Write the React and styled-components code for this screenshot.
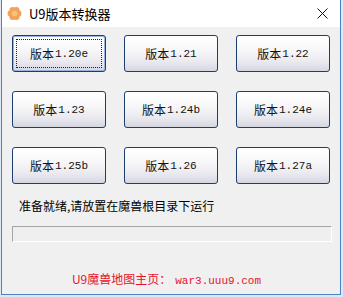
import React from "react";
import styled, { createGlobalStyle } from "styled-components";

const versions = [
  "1.20e", "1.21", "1.22",
  "1.23", "1.24b", "1.24e",
  "1.25b", "1.26", "1.27a",
];

const GlobalStyle = createGlobalStyle`
  html, body {
    margin: 0;
    padding: 0;
    background: #dfe9f5;
  }
  body {
    font-family: "Noto Sans CJK SC", "Noto Sans", sans-serif;
  }
`;

const Window = styled.div`
  box-sizing: border-box;
  width: 340px;
  height: 295px;
  margin-left: 1px;
  border: 1px solid #4a82c3;
  border-top: none;
  background: #f0f0f0;
  display: flex;
  flex-direction: column;
`;

const TitleBar = styled.div`
  height: 27px;
  background: #ffffff;
  display: flex;
  align-items: center;
  padding: 0 0 0 5px;
`;

const Title = styled.span`
  margin-left: 7px;
  font-size: 13px;
  color: #000;
  flex: 1;
`;

const CloseBtn = styled.div`
  width: 32px;
  height: 27px;
  display: flex;
  align-items: center;
  justify-content: center;
  margin-right: 2px;
`;

const Content = styled.div`
  flex: 1;
  display: flex;
  flex-direction: column;
  padding: 8px 9px 0 10px;
`;

const Grid = styled.div`
  display: grid;
  grid-template-columns: repeat(3, 94px);
  column-gap: 18px;
  row-gap: 19px;
`;

const Button = styled.div`
  box-sizing: border-box;
  position: relative;
  height: 37px;
  border: 1px solid #1c3d6e;
  border-radius: 3px;
  background: linear-gradient(#ffffff 0%, #f6f6f8 45%, #e8e8ee 75%, #d6d6e2 100%);
  display: flex;
  align-items: center;
  justify-content: center;
  font-size: 12px;
  color: #111;
  box-shadow: ${(p) => (p.$focused ? "inset 0 0 0 1px #9cb6df" : "none")};

  &::after {
    content: "";
    display: ${(p) => (p.$focused ? "block" : "none")};
    position: absolute;
    inset: 3px;
    border: 1px dotted #222;
  }
`;

const Num = styled.span`
  font-family: "Liberation Mono", monospace;
  font-size: 11px;
  margin-left: 1px;
`;

const Status = styled.div`
  margin: 14px 0 0 7px;
  font-size: 12px;
  line-height: 16px;
  color: #000;
`;

const Progress = styled.div`
  box-sizing: border-box;
  margin: 12px 0 0 0;
  width: 320px;
  height: 16px;
  border-top: 1px solid #a6a6a6;
  border-left: 1px solid #a6a6a6;
  border-right: 1px solid #ffffff;
  border-bottom: 1px solid #ffffff;
  background: #efefef;
`;

const Footer = styled.div`
  margin-top: 29px;
  text-align: center;
  color: #e5132d;
  font-size: 12px;
  line-height: 16px;
  padding-right: 10px;
`;

const Link = styled.span`
  font-family: "Liberation Mono", monospace;
  font-size: 11px;
  margin-left: 4px;
`;

const AppIcon = () => (
  <svg width="15" height="15" viewBox="0 0 16 16">
    {[0, 60, 120, 180, 240, 300].map((a) => (
      <circle
        key={a}
        cx={8 + 4 * Math.cos((a * Math.PI) / 180)}
        cy={8 + 4 * Math.sin((a * Math.PI) / 180)}
        r="3.4"
        fill="#f4a259"
      />
    ))}
    <circle cx="8" cy="8" r="3" fill="#f7c27a" />
  </svg>
);

const CloseIcon = () => (
  <svg width="11" height="11" viewBox="0 0 11 11">
    <path d="M0.5 0.5L10.5 10.5M10.5 0.5L0.5 10.5" stroke="#111" strokeWidth="1" />
  </svg>
);

const App = () => {
  return (
    <React.Fragment>
      <GlobalStyle />
      <Window>
        <TitleBar>
          <AppIcon />
          <Title>U9版本转换器</Title>
          <CloseBtn>
            <CloseIcon />
          </CloseBtn>
        </TitleBar>
        <Content>
          <Grid>
            {versions.map((v, i) => (
              <Button key={v} $focused={i === 0}>
                版本<Num>{v}</Num>
              </Button>
            ))}
          </Grid>
          <Status>准备就绪,请放置在魔兽根目录下运行</Status>
          <Progress />
          <Footer>
            U9魔兽地图主页：<Link>war3.uuu9.com</Link>
          </Footer>
        </Content>
      </Window>
    </React.Fragment>
  );
};

export default App;
